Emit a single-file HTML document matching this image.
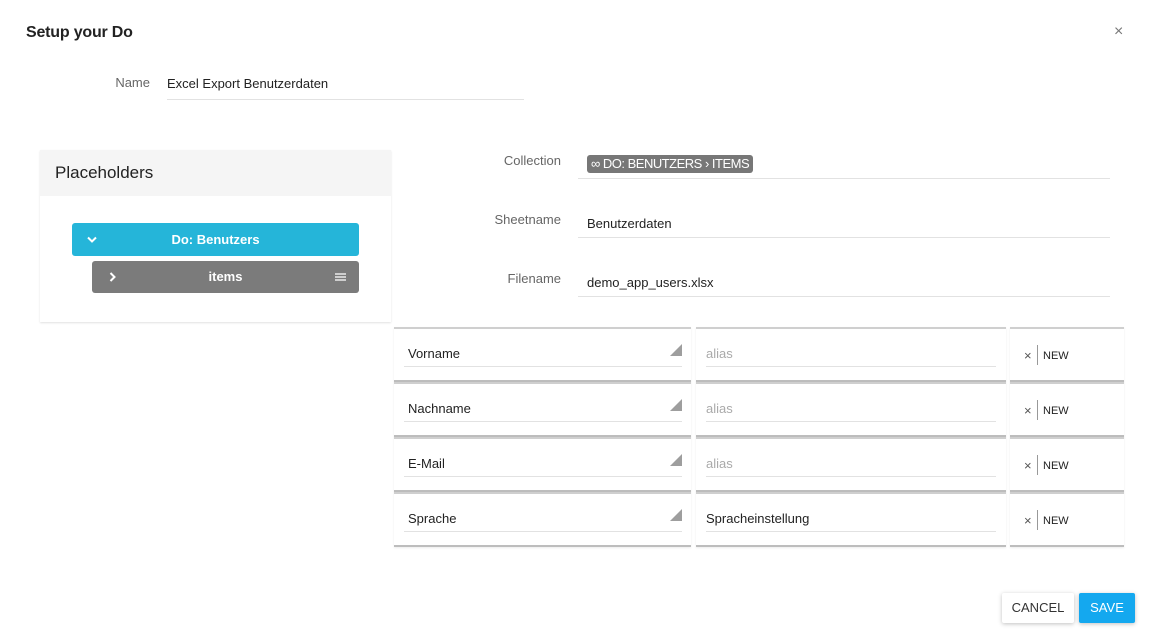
<!DOCTYPE html><html><head><style>
body{margin:0;width:1151px;height:638px;background:#fff;font-family:"Liberation Sans",sans-serif;position:relative;overflow:hidden;color:#222}
.a{position:absolute}
.lbl{font-size:13px;color:#666;text-align:right}
.ul{height:1px;background:#e2e2e2}
.cell{position:absolute;border-top:2px solid #cfcfcf;border-bottom:2px solid #bdbdbd;height:51px;background:#fff;box-shadow:0 1px 2px rgba(0,0,0,.08)}
.t{font-size:13px}
</style></head><body>
<div class="a" style="left:26px;top:24px;font-size:16px;font-weight:bold;color:#222;letter-spacing:-0.2px">Setup your Do</div>
<div class="a" style="left:1114px;top:23px;font-size:16px;color:#777">×</div>
<div class="a lbl" style="left:60px;width:90px;top:75px">Name</div>
<div class="a t" style="left:167px;top:76px">Excel Export Benutzerdaten</div>
<div class="a ul" style="left:167px;top:99px;width:357px"></div>

<div class="a" style="left:40px;top:150px;width:351px;height:172px;box-shadow:0 1px 2px rgba(0,0,0,.12);background:#fff">
 <div style="height:46px;background:#f5f5f5;font-size:17px;padding-left:15px;line-height:46px;color:#222">Placeholders</div>
 <div class="a" style="left:32px;top:73px;width:287px;height:33px;background:#25b5d9;border-radius:3px;color:#fff;font-size:13px;font-weight:bold;text-align:center;line-height:33px">Do: Benutzers<svg class="a" style="left:15px;top:13px" width="10" height="7"><path d="M1 1.5L5 5.5L9 1.5" stroke="#fff" stroke-width="2" fill="none"/></svg></div>
 <div class="a" style="left:52px;top:111px;width:267px;height:32px;background:#7b7b7b;border-radius:3px;color:#fff;font-size:13px;font-weight:bold;text-align:center;line-height:32px">items<svg class="a" style="left:17px;top:11px" width="7" height="10"><path d="M1.5 1L5.5 5L1.5 9" stroke="#fff" stroke-width="2" fill="none"/></svg><svg class="a" style="left:243px;top:12px" width="11" height="8"><path d="M0 1H11M0 4H11M0 7H11" stroke="#fff" stroke-width="1.3"/></svg></div>
</div>

<div class="a lbl" style="left:460px;width:101px;top:153px">Collection</div>
<div class="a" style="left:587px;top:155px;height:18px;background:#777;color:#fff;border-radius:3px;font-size:13px;line-height:18px;padding:0 4px;letter-spacing:-0.5px">&#x221E; DO: BENUTZERS › ITEMS</div>
<div class="a ul" style="left:578px;top:178px;width:532px"></div>
<div class="a lbl" style="left:460px;width:101px;top:212px">Sheetname</div>
<div class="a t" style="left:587px;top:216px">Benutzerdaten</div>
<div class="a ul" style="left:578px;top:237px;width:532px"></div>
<div class="a lbl" style="left:460px;width:101px;top:271px">Filename</div>
<div class="a t" style="left:587px;top:275px">demo_app_users.xlsx</div>
<div class="a ul" style="left:578px;top:296px;width:532px"></div>

<div id="rows"></div>
<script>
var d=[["Vorname","alias",1],["Nachname","alias",1],["E-Mail","alias",1],["Sprache","Spracheinstellung",0]],h="";
d.forEach(function(r,i){var y=327+i*55;
h+='<div class="cell" style="left:394px;top:'+y+'px;width:297px"><div class="a t" style="left:14px;top:17px">'+r[0]+'</div><div class="a" style="left:276px;top:15px;width:0;height:0;border-left:12px solid transparent;border-bottom:12px solid #9e9e9e"></div><div class="a ul" style="left:10px;top:37px;width:278px"></div></div>';
h+='<div class="cell" style="left:696px;top:'+y+'px;width:310px"><div class="a t" style="left:10px;top:17px;color:'+(r[2]?'#aaa':'#222')+'">'+r[1]+'</div><div class="a ul" style="left:10px;top:37px;width:290px"></div></div>';
h+='<div class="cell" style="left:1010px;top:'+y+'px;width:114px"><div class="a" style="left:14px;top:19px;font-size:13px;color:#555">×</div><div class="a" style="left:27px;top:16px;width:1px;height:20px;background:#999"></div><div class="a" style="left:33px;top:21px;font-size:11px">NEW</div></div>';});
document.getElementById('rows').innerHTML=h;
</script>

<div class="a" style="left:1002px;top:593px;width:72px;height:30px;background:#fff;box-shadow:0 1px 4px rgba(0,0,0,.25);border-radius:2px;font-size:13px;text-align:center;line-height:30px;color:#333">CANCEL</div>
<div class="a" style="left:1079px;top:593px;width:56px;height:30px;background:#14a8ef;box-shadow:0 1px 4px rgba(0,0,0,.25);border-radius:2px;font-size:13px;text-align:center;line-height:30px;color:#fff">SAVE</div>
</body></html>
